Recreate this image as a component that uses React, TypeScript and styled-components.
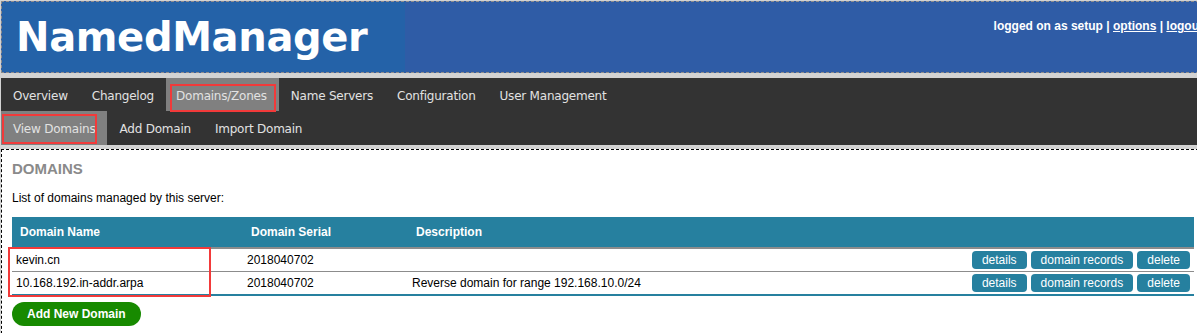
import React from "react";
import styled, { createGlobalStyle } from "styled-components";

const GlobalStyle = createGlobalStyle`
  html, body {
    margin: 0;
    padding: 0;
    background: #d3d3d3;
    overflow: hidden;
  }
  body {
    font-family: "Liberation Sans", Arial, sans-serif;
    font-size: 12px;
    color: #000;
  }
`;

const Page = styled.div`
  width: 1213px;
  padding: 1px;
`;

const Header = styled.div`
  display: flex;
  justify-content: space-between;
  height: 70px;
  border: 1px dashed #8c8c8c;
  background: #2f5ca6;
`;

const Logo = styled.div`
  width: 389px;
  padding-left: 14px;
  background: #2462a8;
  color: #fff;
  font-family: "DejaVu Sans", Verdana, sans-serif;
  font-weight: bold;
  font-size: 40px;
  line-height: 70px;
  letter-spacing: -0.35px;
`;

const UserLinks = styled.div`
  padding: 17px 10px 0 0;
  color: #fff;
  font-weight: bold;
  font-size: 12px;

  a {
    color: #fff;
    text-decoration: underline;
  }
`;

const Nav = styled.div`
  margin-top: 5px;
  background: #333333;
`;

const NavRow = styled.div<{ $height: number; $shift?: number }>`
  display: flex;
  height: ${p => p.$height}px;

  & > div {
    padding-top: ${p => p.$shift ?? 0}px;
  }
`;

const NavItem = styled.div<{ $active?: boolean; $padLeft?: number }>`
  position: relative;
  display: flex;
  align-items: center;
  padding: 0 12px 0 ${p => p.$padLeft ?? 12}px;
  background: ${p => (p.$active ? "#808080" : "transparent")};
  color: #e2e2e2;
  font-family: "DejaVu Sans", Verdana, sans-serif;
  font-size: 12px;
  letter-spacing: -0.22px;
`;

const Annotation = styled.span<{ $top: number; $left: number; $width: number; $height: number }>`
  position: absolute;
  top: ${p => p.$top}px;
  left: ${p => p.$left}px;
  width: ${p => p.$width}px;
  height: ${p => p.$height}px;
  border: 2px solid #f23a3a;
  box-sizing: border-box;
  pointer-events: none;
`;

const Content = styled.div`
  margin-top: 4px;
  height: 170px;
  border: 1px dashed #000;
  background: #fff;
  padding: 9px 10px;
`;

const Title = styled.h3`
  margin: 0;
  color: #8a8a8a;
  font-size: 15px;
  font-weight: bold;
  line-height: 20px;
`;

const Intro = styled.p`
  margin: 12px 0 0;
  font-size: 12px;
  line-height: 14px;
`;

const Table = styled.div`
  position: relative;
  width: 1182px;
  margin-top: 12px;
  border-bottom: 2px solid #26809f;
`;

const Row = styled.div<{ $head?: boolean }>`
  display: grid;
  grid-template-columns: 231px 165px 1fr auto;
  align-items: center;
  height: ${p => (p.$head ? 30 : 22)}px;
  background: ${p => (p.$head ? "#26809f" : "#fff")};
  color: ${p => (p.$head ? "#fff" : "#000")};
  font-weight: ${p => (p.$head ? "bold" : "normal")};
  border-bottom: ${p => (p.$head ? "1px solid #8c8c8c" : "none")};

  & + & {
    border-top: 1px solid #8c8c8c;
  }
`;

const Cell = styled.div<{ $head?: boolean }>`
  padding-left: ${p => (p.$head ? 8 : 4)}px;
  white-space: nowrap;
`;

const Actions = styled.div`
  display: flex;
  gap: 4px;
  padding-right: 4px;
`;

const SmallButton = styled.span`
  display: inline-flex;
  align-items: center;
  height: 18px;
  padding: 0 10px;
  border-radius: 4px;
  background: #26809f;
  color: #fff;
  font-size: 12px;
`;

const AddButton = styled.div`
  display: inline-flex;
  align-items: center;
  height: 24px;
  margin-top: 6px;
  padding: 0 15px;
  border-radius: 12px;
  background: #178a00;
  color: #fff;
  font-size: 12px;
  font-weight: bold;
`;

const domains = [
  { name: "kevin.cn", serial: "2018040702", description: "" },
  {
    name: "10.168.192.in-addr.arpa",
    serial: "2018040702",
    description: "Reverse domain for range 192.168.10.0/24",
  },
];

const topMenu = [
  "Overview",
  "Changelog",
  "Domains/Zones",
  "Name Servers",
  "Configuration",
  "User Management",
];

const subMenu = ["View Domains", "Add Domain", "Import Domain"];

export default function App() {
  return (
    <Page>
      <GlobalStyle />
      <Header>
        <Logo>NamedManager</Logo>
        <UserLinks>
          logged on as setup | <a>options</a> | <a>logout</a>
        </UserLinks>
      </Header>

      <Nav>
        <NavRow $height={33} $shift={3}>
          {topMenu.map(item => (
            <NavItem key={item} $active={item === "Domains/Zones"} $padLeft={item === "Domains/Zones" ? 10 : 12}>
              {item}
              {item === "Domains/Zones" && <Annotation $top={6} $left={4} $width={106} $height={28} />}
            </NavItem>
          ))}
        </NavRow>
        <NavRow $height={34} $shift={1}>
          {subMenu.map(item => (
            <NavItem key={item} $active={item === "View Domains"}>
              {item}
              {item === "View Domains" && <Annotation $top={3} $left={1} $width={95} $height={30} />}
            </NavItem>
          ))}
        </NavRow>
      </Nav>

      <Content>
        <Title>DOMAINS</Title>
        <Intro>List of domains managed by this server:</Intro>
        <Table>
          <Row $head>
            <Cell $head>Domain Name</Cell>
            <Cell $head>Domain Serial</Cell>
            <Cell $head>Description</Cell>
            <Cell $head />
          </Row>
          {domains.map(d => (
            <Row key={d.name}>
              <Cell>{d.name}</Cell>
              <Cell>{d.serial}</Cell>
              <Cell>{d.description}</Cell>
              <Actions>
                <SmallButton>details</SmallButton>
                <SmallButton>domain records</SmallButton>
                <SmallButton>delete</SmallButton>
              </Actions>
            </Row>
          ))}
          <Annotation $top={30} $left={-4} $width={203} $height={50} />
        </Table>
        <AddButton>Add New Domain</AddButton>
      </Content>
    </Page>
  );
}
